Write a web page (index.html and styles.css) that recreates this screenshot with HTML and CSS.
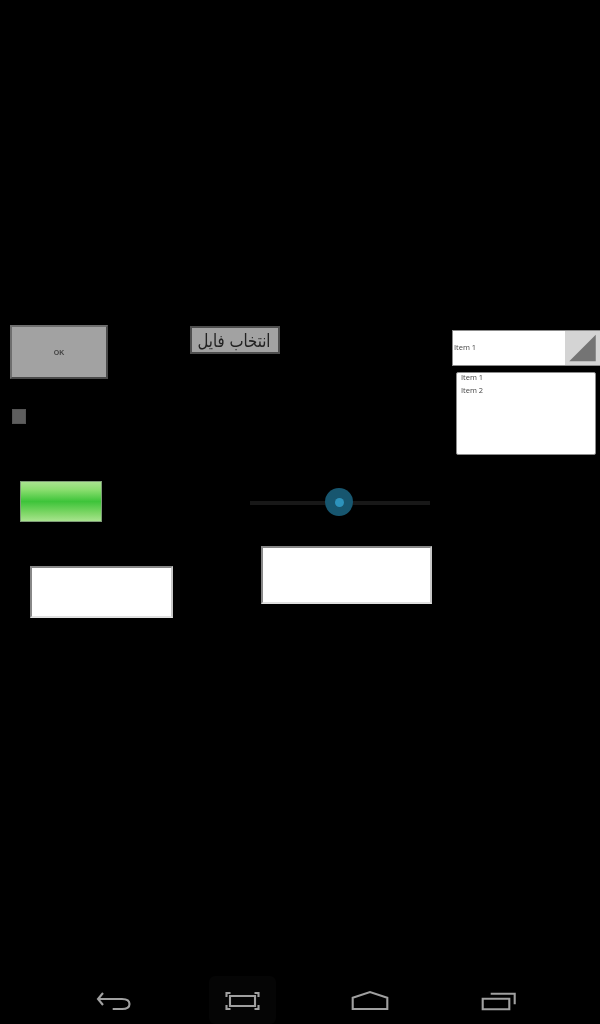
FILE: index.html
```html
<!DOCTYPE html>
<html lang="en">
<head>
<meta charset="utf-8">
<title>Widgets</title>
<link rel="stylesheet" href="styles.css">
</head>
<body>
<main class="canvas">
  <button class="widget ok-button"><span class="soft">OK</span></button>
  <button class="widget file-button" dir="rtl"><span class="soft file-label">انتخاب فایل</span></button>
  <div class="widget checkbox"></div>
  <div class="widget progress"></div>
  <div class="widget field field-left"></div>
  <div class="widget slider">
    <div class="slider-track"></div>
    <div class="slider-halo"><div class="slider-dot"></div></div>
  </div>
  <div class="widget field field-right"></div>
  <div class="widget combo">
    <span class="combo-text soft">Item 1</span>
    <span class="combo-arrow">
      <svg class="combo-icon" viewBox="0 0 36 36" aria-hidden="true"><path d="M4 32 32 4V32Z"/></svg>
    </span>
  </div>
  <ul class="widget listbox">
    <li class="list-item soft">Item 1</li>
    <li class="list-item soft">Item 2</li>
  </ul>
</main>
<nav class="navbar">
  <span class="nav-slot"><span class="nav-hit">
    <svg class="nav-icon" viewBox="0 0 40 24" aria-hidden="true"><path d="M9 5 4 11 9 17M4 11H28Q35.500 11 35.500 16T28 21H18.700"/></svg>
  </span></span>
  <span class="nav-slot"><span class="nav-hit nav-hit-active">
    <svg class="nav-icon" viewBox="0 0 40 24" aria-hidden="true"><path d="M8 8H33V18H8ZM4.500 9V5H8.500M32.500 5H36.500V9M4.500 17V21H8.500M32.500 21H36.500V17"/></svg>
  </span></span>
  <span class="nav-slot"><span class="nav-hit">
    <svg class="nav-icon" viewBox="0 0 40 24" aria-hidden="true"><path d="M2.700 21V9.700L20 4 37.300 9.700V21Z"/></svg>
  </span></span>
  <span class="nav-slot"><span class="nav-hit">
    <svg class="nav-icon" viewBox="0 0 40 24" aria-hidden="true"><path d="M4.700 10.700H31.300V21.300H4.700ZM12.700 5.700H36.700V16.300"/></svg>
  </span></span>
</nav>
</body>
</html>
```
FILE: styles.css
```css
* { box-sizing: border-box; }
html, body { margin: 0; height: 100%; background: #000; }
body {
  display: flex;
  flex-direction: column;
  width: 600px;
  height: 1024px;
  overflow: hidden;
  font-family: "Open Sans", "Liberation Sans", sans-serif;
}
.canvas { position: relative; flex: 1; }
.widget { position: absolute; margin: 0; padding: 0; }
.soft { display: inline-block; filter: blur(.3px); }

.ok-button {
  left: 10px; top: 325px; width: 98px; height: 54px;
  background: #a2a2a2;
  border: 2px solid #4a4a4a;
  border-top-color: #6e6e6e;
  border-left-color: #6e6e6e;
  color: #444;
  font: bold 7px "Liberation Sans", sans-serif;
}
.file-button {
  left: 190px; top: 326px; width: 90px; height: 28px;
  background: #a2a2a2;
  border: 2px solid #4e4e4e;
  color: #222;
  font: 18px "DejaVu Sans", sans-serif;
  white-space: nowrap;
}
.file-label { transform: scaleX(.83); }
.checkbox {
  left: 12px; top: 409px; width: 14px; height: 15px;
  background: #5e5e5e;
  border: 1px solid #555;
}
.progress {
  left: 20px; top: 481px; width: 82px; height: 41px;
  border: 1px solid #7f9c78;
  background: linear-gradient(#a9e38f, #8ade6f 20%, #3ec43a 50%, #7fd767 80%, #a8e38e);
}
.field {
  background: #fff;
  border: 2px solid;
  border-color: #888 #c8c8c8 #e0e0e0 #888;
}
.field-left { left: 30px; top: 566px; width: 143px; height: 52px; }
.field-right { left: 261px; top: 546px; width: 171px; height: 58px; }

.slider { left: 250px; top: 488px; width: 180px; height: 28px; }
.slider-track {
  position: absolute; left: 0; right: 0; top: 13px; height: 4px;
  background: #181818;
}
.slider-halo {
  position: absolute; left: 75px; top: 0; width: 28px; height: 28px;
  border-radius: 50%;
  background: #17566f;
  display: flex; align-items: center; justify-content: center;
}
.slider-dot { width: 9px; height: 9px; border-radius: 50%; background: #2d93bc; }

.combo {
  left: 452px; top: 330px; width: 148px; height: 36px;
  display: flex;
  background: #fff;
  border: 1px solid #8c8c8c;
  border-right: 0;
  font: 7.5px "Open Sans", sans-serif;
  color: #444;
}
.combo-text { flex: 1; align-self: center; padding: 0 0 2px 1px; }
.combo-arrow { width: 35px; background: #d4d4d4; }
.combo-icon { display: block; width: 35px; height: 34px; fill: #747474; }

.listbox {
  left: 456px; top: 372px; width: 140px; height: 83px;
  list-style: none;
  background: #fff;
  border: 1px solid #8c8c8c;
  border-radius: 2px;
  padding: 0 0 0 4px;
  font: 7.5px "Open Sans", sans-serif;
  color: #444;
}
.list-item { display: block; height: 13px; line-height: 8px; }

.navbar {
  flex: none;
  height: 48px;
  display: flex;
  padding-left: 50px;
}
.nav-slot {
  width: 128px; height: 48px;
  display: flex; justify-content: center;
}
.nav-hit {
  width: 67px; height: 48px;
  display: flex; align-items: center; justify-content: center;
}
.nav-hit-active { background: #050505; border-radius: 6px; }
.nav-icon {
  width: 40px; height: 24px;
  fill: none;
  stroke: #a0a0a0;
  stroke-width: 2.1;
  filter: blur(.3px);
}
```
